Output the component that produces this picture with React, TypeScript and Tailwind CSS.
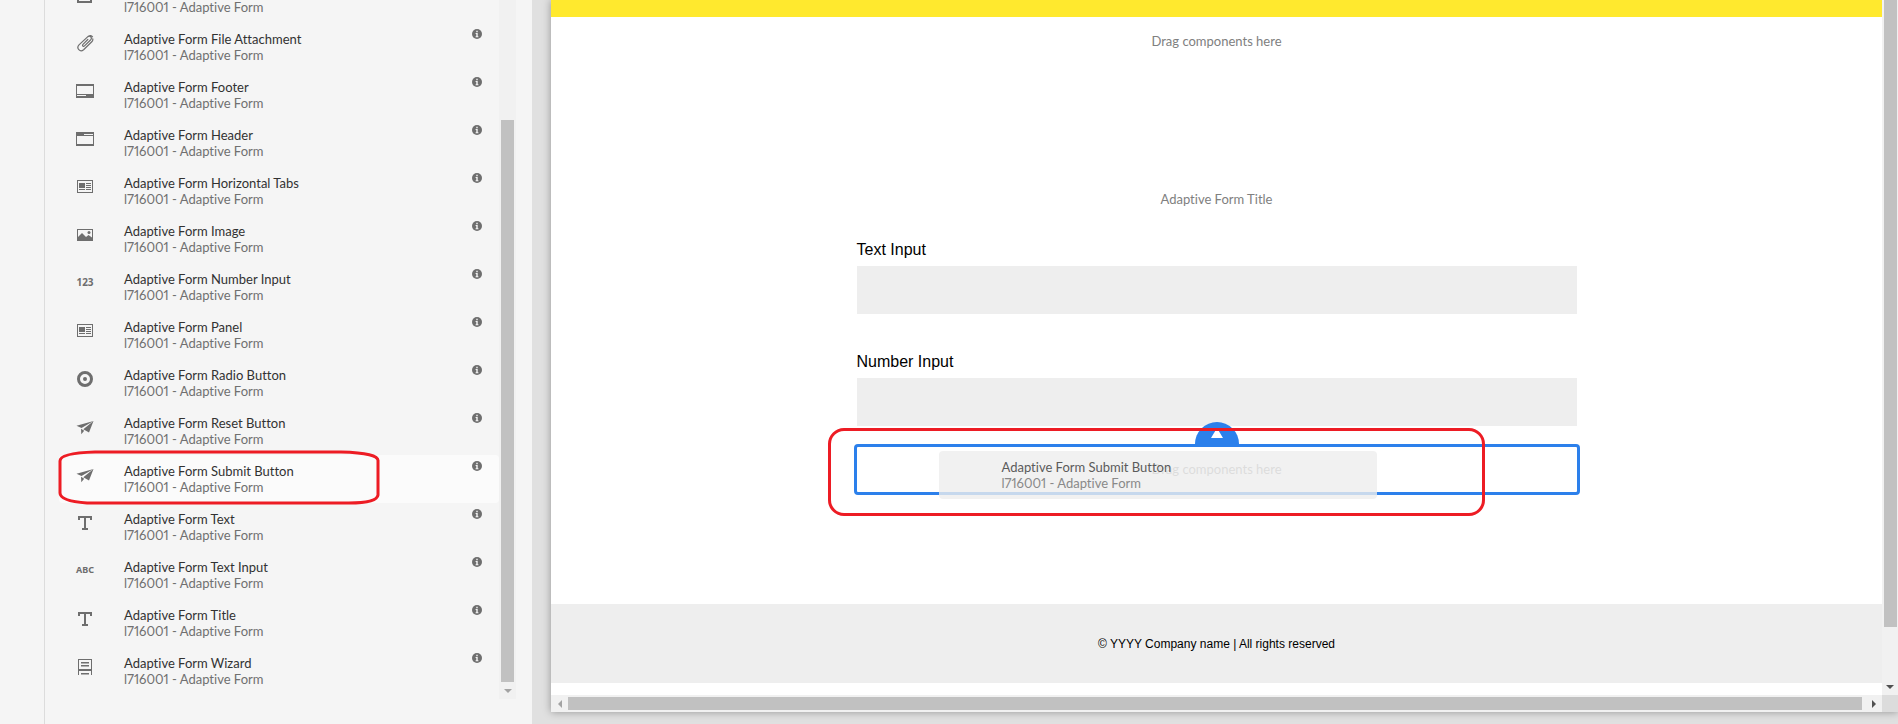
import type { ReactNode } from "react";

type IconName =
  | "box"
  | "clip"
  | "footer"
  | "header"
  | "panel"
  | "image"
  | "number"
  | "radio"
  | "plane"
  | "title"
  | "abc"
  | "wizard";

const components: { name: string; icon: IconName; active?: boolean }[] = [
  { name: "Adaptive Form Email", icon: "box" },
  { name: "Adaptive Form File Attachment", icon: "clip" },
  { name: "Adaptive Form Footer", icon: "footer" },
  { name: "Adaptive Form Header", icon: "header" },
  { name: "Adaptive Form Horizontal Tabs", icon: "panel" },
  { name: "Adaptive Form Image", icon: "image" },
  { name: "Adaptive Form Number Input", icon: "number" },
  { name: "Adaptive Form Panel", icon: "panel" },
  { name: "Adaptive Form Radio Button", icon: "radio" },
  { name: "Adaptive Form Reset Button", icon: "plane" },
  { name: "Adaptive Form Submit Button", icon: "plane", active: true },
  { name: "Adaptive Form Text", icon: "title" },
  { name: "Adaptive Form Text Input", icon: "abc" },
  { name: "Adaptive Form Title", icon: "title" },
  { name: "Adaptive Form Wizard", icon: "wizard" },
];

const shapes: Partial<Record<IconName, ReactNode>> = {
  box: <path d="M1 2h15v15H1zM3 4v11h11V4z" fillRule="evenodd" />,
  clip: (
    <path
      d="M11.800 5.500 7 10.300c-1.200 1.300.3 2.700 1.500 1.500l6-5.800c2.200-2.300-.6-5.300-2.900-3.100L3 10.900c-3 3.200 1 8 4.600 4.800l8.200-7.900c.8-.8 1.200-1.700 1-2.900M12 2.600c2-1.500 3.600-1.200 4.500.2"
      fill="none"
      stroke="currentColor"
      strokeWidth="1.200"
      strokeLinecap="round"
    />
  ),
  footer: <path d="M0 2h18v14H0zM1 4v8h16V4zM1 13v1h9v-1z" fillRule="evenodd" />,
  header: <path d="M0 2h18v14H0zM1 6v8h16V6zM8 4v1h9V4z" fillRule="evenodd" />,
  panel: (
    <path
      d="M1 2h16v13H1zM2 3v11h14V3zM3 5h6v5H3zM3 11h6v1H3zM10 5h5v1h-5zM10 7h5v1h-5zM10 9h5v1h-5zM10 11h5v1h-5z"
      fillRule="evenodd"
    />
  ),
  image: (
    <>
      <path d="M1 3h16v12H1zM2 4v10h14V4z" fillRule="evenodd" />
      <path d="M2 14v-3l4-4 4 4 2.500-2L16 11.500V14z" />
      <circle cx="13" cy="6.500" r="1.500" />
    </>
  ),
  radio: (
    <>
      <circle cx="9" cy="9" r="6.500" fill="none" stroke="currentColor" strokeWidth="3" />
      <circle cx="9" cy="9" r="2" />
    </>
  ),
  plane: <path d="M.5 7.800 17.500 3 5.500 10zM17.500 3 13 14.500 7.300 11.300zM5 10.800l3.200 2L5.300 16.300z" />,
  title: <path d="M2 2h14v4h-2V4h-4v10h2v2H6v-2h2V4H4v2H2z" />,
  wizard: (
    <>
      <path d="M2 1h14v12H2zM3 2v9h12V2zM5 4h8v1H5zM5 7h8v1H5zM2 13h1v4H2zM15 13h1v4h-1zM5 15h8v1H5z" fillRule="evenodd" />
      <path d="M5 5h8v1H5zM5 8h8v1H5zM5 16h8v1H5z" opacity="0.5" />
    </>
  ),
};

const crisp: IconName[] = ["box", "footer", "header", "panel", "title", "wizard"];

function ComponentIcon({ icon }: { icon: IconName }) {
  if (icon === "number")
    return (
      <span className="flex h-4 w-[18px] items-center justify-center font-['Noto_Sans',sans-serif] text-[10px] font-bold">
        123
      </span>
    );
  if (icon === "abc")
    return (
      <span className="flex h-4 w-[18px] items-center justify-center font-['Noto_Sans',sans-serif] text-[9px] font-bold">
        ABC
      </span>
    );
  return (
    <svg
      viewBox="0 0 18 18"
      className="h-[18px] w-[18px]"
      fill="currentColor"
      shapeRendering={crisp.includes(icon) ? "crispEdges" : "auto"}
      aria-hidden="true"
    >
      {shapes[icon]}
    </svg>
  );
}

function InfoButton({ name }: { name: string }) {
  return (
    <button type="button" aria-label={`About ${name}`} className="mt-1.5 mr-[17px] h-2.5 w-2.5 shrink-0 text-[#6e6e6e]">
      <svg viewBox="0 0 10 10" className="block h-2.5 w-2.5" aria-hidden="true">
        <circle cx="5" cy="5" r="5" fill="currentColor" />
        <path d="M4.300 1.800h1.400v1.400H4.300zM3.600 4h2.100v3.200h.7v1H3.600v-1h.7V5h-.7z" fill="#f5f5f5" />
      </svg>
    </button>
  );
}

function Arrow({ d }: { d: string }) {
  return (
    <svg viewBox="0 0 8 8" className="h-2 w-2" fill="currentColor" aria-hidden="true">
      <path d={d} />
    </svg>
  );
}

function Sidebar() {
  return (
    <aside className="flex w-[532px] shrink-0 bg-[#f5f5f5]">
      <div className="w-[45px] shrink-0 border-r border-[#dcdcdc]" />
      <div className="mb-[25px] flex flex-1 overflow-hidden">
        <ul className="-mt-[25px] w-[454px] pl-3.5">
          {components.map((c) => (
            <li key={c.name} className={`flex h-12 rounded pl-[17px] ${c.active ? "bg-[#fbfbfb]" : ""}`}>
              <div className="mt-[11px] h-[18px] text-[#6e6e6e]">
                <ComponentIcon icon={c.icon} />
              </div>
              <div className="ml-[30px] flex-1 pt-2 text-[13px] leading-4">
                <div className="text-[#323232]">{c.name}</div>
                <div className="proportional-nums text-[#707070]">l716001 - Adaptive Form</div>
              </div>
              <InfoButton name={c.name} />
            </li>
          ))}
        </ul>
        <div className="flex w-[17px] flex-col items-center bg-[#f1f1f1]">
          <div className="mt-[120px] w-[13px] flex-1 bg-[#c1c1c1]" />
          <div className="flex h-[17px] items-center justify-center text-[#a3a3a3]">
            <Arrow d="M0 2h8L4 6z" />
          </div>
        </div>
      </div>
      <svg
        viewBox="0 0 324 58"
        className="pointer-events-none absolute top-[449px] left-[57px] h-[58px] w-[324px]"
        fill="none"
        stroke="#ed1c24"
        strokeWidth="3"
        aria-hidden="true"
      >
        <path d="M38 3H284Q322 4 321 12V46Q320 54 292 54H30Q3 52 3 44V12Q3 4 38 3z" />
      </svg>
    </aside>
  );
}

function Field({ id, label }: { id: string; label: string }) {
  return (
    <div>
      <label htmlFor={id} className="block font-['Liberation_Sans',sans-serif] text-base leading-8 text-black">
        {label}
      </label>
      <input id={id} type="text" className="block h-12 w-full bg-[#eeeeee]" />
    </div>
  );
}

function DropZone() {
  return (
    <div className="relative -mx-[3px] mt-[18px]">
      <div className="flex h-[51px] items-center justify-center rounded border-[3px] border-[#2c80eb] text-[13px] text-[#959595]">
        Drag components here
      </div>
      <div className="absolute bottom-full left-1/2 flex h-[22px] w-11 -translate-x-1/2 items-center justify-center rounded-t-full bg-[#2c80eb] text-white">
        <svg viewBox="0 0 12 10" className="h-2.5 w-3" fill="currentColor" aria-hidden="true">
          <path d="M6 0l6 10H0z" />
        </svg>
      </div>
      <div className="absolute top-[7px] left-[85px] h-12 w-[438px] rounded bg-[#eeeeee]/80 pt-2 pl-[63px] text-[13px] leading-4">
        <div className="text-[#5b5b5b]">Adaptive Form Submit Button</div>
        <div className="proportional-nums text-[#898989]">l716001 - Adaptive Form</div>
      </div>
      <div className="absolute -top-4 -left-[26px] h-[88px] w-[657px] rounded-2xl border-[3px] border-[#ed1c24]" />
    </div>
  );
}

export default function App() {
  return (
    <div className="relative flex h-screen overflow-hidden bg-[#e0e0e0] font-['Lato',sans-serif] [font-variant-ligatures:none]">
      <Sidebar />
      <main className="mb-3 ml-[19px] flex min-w-0 flex-1 flex-col bg-white shadow-[0_0_8px_rgba(0,0,0,0.35)]">
        <div className="flex min-h-0 flex-1">
          <div className="flex min-w-0 flex-1 flex-col">
            <div className="h-[17px] bg-[#ffe92e]" />
            <p className="mt-4 text-center text-[13px] leading-4 text-[#808080]">Drag components here</p>
            <div className="mx-auto mt-[142px] w-[720px]">
              <h1 className="text-center text-[13px] leading-4 text-[#808080]">Adaptive Form Title</h1>
              <form className="mt-[27px]">
                <div className="flex flex-col gap-8">
                  <Field id="text-input" label="Text Input" />
                  <Field id="number-input" label="Number Input" />
                </div>
                <DropZone />
              </form>
            </div>
            <footer className="mt-auto mb-3 flex h-[79px] items-center justify-center bg-[#eeeeee] font-['Liberation_Sans',sans-serif] text-xs text-black">
              © YYYY Company name | All rights reserved
            </footer>
          </div>
          <div className="flex w-4 flex-col items-center justify-between bg-[#f1f1f1]">
            <div className="mb-[51px] w-[13px] flex-1 bg-[#c1c1c1]" />
            <div className="flex h-[17px] items-center text-[#505050]">
              <Arrow d="M0 2h8L4 6z" />
            </div>
          </div>
        </div>
        <div className="flex h-[17px] shrink-0 items-center bg-[#f1f1f1]">
          <div className="flex w-[17px] justify-center text-[#a3a3a3]">
            <Arrow d="M6 0v8L2 4z" />
          </div>
          <div className="mr-[3px] h-[13px] flex-1 bg-[#c1c1c1]" />
          <div className="flex w-[17px] justify-center text-[#505050]">
            <Arrow d="M2 0v8l4-4z" />
          </div>
          <div className="h-full w-4 bg-[#dcdcdc]" />
        </div>
      </main>
    </div>
  );
}
